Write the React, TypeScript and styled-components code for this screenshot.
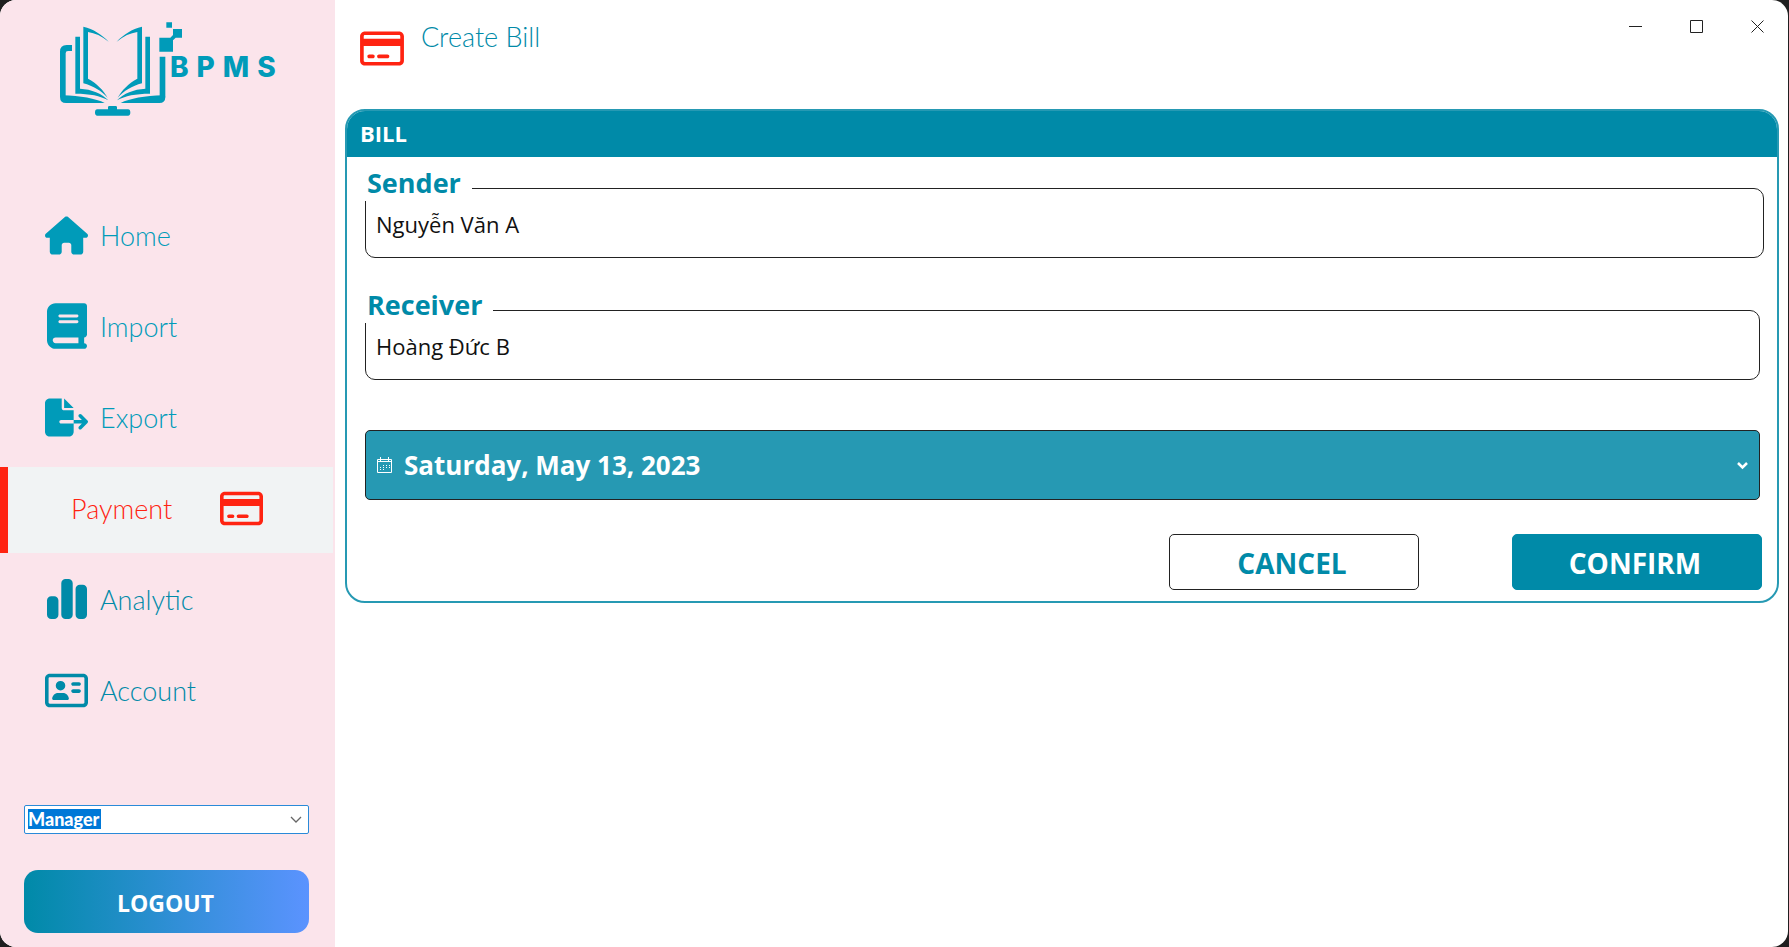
import React, { useState } from "react";
import styled, { createGlobalStyle } from "styled-components";
import {
  FaHouse,
  FaBook,
  FaFileExport,
  FaRegCreditCard,
  FaChartSimple,
  FaRegAddressCard,
} from "react-icons/fa6";

const teal = "#008aa8";
const cyan = "#009bb9";
const red = "#ff2311";
const uiFont = '"Open Sans", "Noto Sans", sans-serif';
const roundFont = 'Lato, "Noto Sans", sans-serif';

const GlobalStyle = createGlobalStyle`
  *, *::before, *::after { box-sizing: border-box; }
  body { margin: 0; background: #1f1f1f; font-family: ${uiFont}; }
  button, input, select { font-family: inherit; margin: 0; }
  button { cursor: pointer; }
`;

const AppWindow = styled.div`
  display: flex;
  min-height: 100vh;
  margin-right: 1px;
  border-radius: 16px;
  overflow: hidden;
  background: #fff;
`;

const Sidebar = styled.aside`
  display: flex;
  flex-direction: column;
  flex: 0 0 335px;
  background: #fbe4eb;
`;

const Logo = styled.div`
  display: flex;
  align-items: flex-start;
  height: 194px;
  padding: 20px 0 0 58px;
`;

const LogoMark = styled.svg`
  width: 110px;
  height: 98px;
  overflow: visible;
`;

const Wordmark = styled.span`
  margin: 33px 0 0 2px;
  font: 800 28px/28px Inter, sans-serif;
  letter-spacing: 8px;
  color: ${cyan};
`;

const Nav = styled.nav`
  display: flex;
  flex-direction: column;
  gap: 5px;
  padding-right: 2px;
`;

const NavItem = styled.a<{ $color: string; $active?: boolean }>`
  display: flex;
  align-items: center;
  height: 86px;
  gap: ${(p) => (p.$active ? 48 : 12)}px;
  padding-bottom: 2px;
  padding-left: ${(p) => (p.$active ? 63 : 37)}px;
  border-left: 8px solid ${(p) => (p.$active ? red : "transparent")};
  background: ${(p) => (p.$active ? "#f1f3f4" : "transparent")};
  color: ${(p) => p.$color};
  font: 300 27px/30px ${roundFont};
  text-decoration: none;
`;

const IconSlot = styled.span<{ $tall?: boolean }>`
  display: flex;
  justify-content: center;
  width: 43px;
  padding-bottom: 2px;

  svg {
    width: ${(p) => (p.$tall ? 40 : 43)}px;
    height: ${(p) => (p.$tall ? 46 : 39)}px;
  }
`;

const SidebarFooter = styled.div`
  display: flex;
  flex-direction: column;
  gap: 36px;
  margin-top: auto;
  padding: 0 26px 14px 24px;
`;

const RoleBox = styled.div`
  position: relative;
  display: flex;

  svg {
    position: absolute;
    top: 11px;
    right: 7px;
    pointer-events: none;
  }
`;

const RoleSelect = styled.select`
  appearance: none;
  width: 100%;
  height: 29px;
  padding: 0 24px 2px 3px;
  border: 1px solid #2a8ad8;
  border-radius: 2px;
  outline: none;
  background: linear-gradient(#0078d7, #0078d7) 3px 3px / 73px 20px no-repeat #fff;
  color: #fff;
  font: 900 18px/20px ${roundFont};
`;

const Logout = styled.button`
  height: 63px;
  padding: 2px 2px 0 0;
  border: 0;
  border-radius: 14px;
  background: linear-gradient(90deg, ${teal}, #5b93ff);
  color: #fff;
  font: 700 23px/32px ${uiFont};
`;

const Main = styled.main`
  display: flex;
  flex-direction: column;
  flex: 1;
  min-width: 0;
  padding-left: 10px;
`;

const TopBar = styled.header`
  display: flex;
  align-items: flex-start;
  height: 109px;
`;

const Title = styled.h1`
  display: flex;
  align-items: flex-start;
  gap: 17px;
  margin: 0;
  padding: 22px 0 0 15px;
  color: ${teal};
  font: 300 27px/30px ${roundFont};

  svg {
    width: 44px;
    height: 39px;
    margin-top: 7px;
    color: ${red};
  }
`;

const WindowControls = styled.div`
  display: flex;
  margin-left: auto;
`;

const WindowButton = styled.button`
  display: flex;
  align-items: center;
  justify-content: center;
  width: 61px;
  height: 53px;
  padding: 0;
  border: 0;
  background: none;
`;

const Panel = styled.section`
  margin-right: 9px;
  border: 2px solid #2699b3;
  border-radius: 20px;
  overflow: hidden;
`;

const PanelTitle = styled.h2`
  margin: -2px -2px 0;
  padding: 8px 15px;
  background: ${teal};
  color: #fff;
  font: 700 22px/32px ${uiFont};
`;

const Form = styled.form`
  display: flex;
  flex-direction: column;
  padding: 2px 13px 11px 18px;
`;

const Field = styled.div<{ $inset?: boolean }>`
  display: flex;
  flex-direction: column;
  align-items: flex-start;
  margin: 0 ${(p) => (p.$inset ? 4 : 0)}px 23px 0;
`;

const FieldLabel = styled.label`
  z-index: 1;
  height: 42px;
  margin-bottom: -13px;
  padding: 5px 11px 0 2px;
  background: #fff;
  color: ${teal};
  font: 700 27px/37px ${uiFont};
`;

const TextInput = styled.input`
  width: 100%;
  height: 70px;
  padding: 2px 10px 0;
  border: 1px solid #222;
  border-radius: 10px;
  outline: none;
  background: #fff;
  color: #111;
  font: 400 22px/32px ${uiFont};
`;

const DateButton = styled.button`
  display: flex;
  align-items: center;
  gap: 12px;
  height: 70px;
  margin: 27px 4px 34px 0;
  padding: 0 11px;
  border: 1px solid #222;
  border-radius: 5px;
  background: #2699b3;
  color: #fff;
  font: 700 26px/36px ${uiFont};

  svg:last-child {
    margin-left: auto;
  }
`;

const Actions = styled.div`
  display: flex;
  justify-content: flex-end;
  gap: 93px;
  margin-right: 2px;
`;

const ActionButton = styled.button<{ $primary?: boolean }>`
  width: 250px;
  height: 56px;
  padding: 2px 4px 0 0;
  border: 1px solid ${(p) => (p.$primary ? teal : "#222")};
  border-radius: 5px;
  background: ${(p) => (p.$primary ? teal : "#fff")};
  color: ${(p) => (p.$primary ? "#fff" : teal)};
  font: 700 28px/36px ${uiFont};
`;

/* One half of the open book: the outer cover and two pages. */
const BookHalf = () => (
  <>
    <path d="M188 286 C240 287 288 296 314 309 H198 Q180 309 180 290Z" />
    <path d="M226 110H240V266C275 268 305 280 325 301C300 287 270 281 226 281Z" />
    <path d="M250 80C280 87 305 103 326 125C305 108 285 99 264 96V236C290 250 310 270 323 293C305 273 280 258 250 250Z" />
  </>
);

const BrandMark = () => (
  <LogoMark viewBox="174 60 330 294" fill={cyan} aria-hidden="true">
    <path d="M216 135V153H204Q197 153 197 160V292H180V155Q180 135 200 135Z" />
    <BookHalf />
    <g transform="translate(676 0) scale(-1 1)">
      <BookHalf />
      <path d="M180 170H197V292H180Z" />
    </g>
    <path d="M324 322Q324 318 328 318H347Q351 318 351 322V328H384Q391 328 391 337.500Q391 347 384 347H292Q285 347 285 337.500Q285 328 292 328H324Z" />
    <path d="M478 113H511L519 105V87H546V113H527L519 121V155H478Z" />
    <path d="M499 67H516V83H499Z" />
  </LogoMark>
);

const CalendarIcon = () => (
  <svg width="15" height="16" viewBox="0 0 15 16" fill="none" stroke="#fff" aria-hidden="true">
    <path d="M.5 2.500H14.500V15.500H.5ZM.5 4.500H14.500M3.500 0V4M11.500 0V4" />
    <path d="M6 8.500H13M3 10.500H13M3 12.500H9" strokeDasharray="1 2" />
  </svg>
);

const App = () => {
  const [sender, setSender] = useState("Nguyễn Văn A");
  const [receiver, setReceiver] = useState("Hoàng Đức B");

  return (
    <>
      <GlobalStyle />
      <AppWindow>
        <Sidebar>
          <Logo>
            <BrandMark />
            <Wordmark>BPMS</Wordmark>
          </Logo>
          <Nav>
            <NavItem href="#home" $color={cyan}>
              <IconSlot><FaHouse /></IconSlot>
              Home
            </NavItem>
            <NavItem href="#import" $color={cyan}>
              <IconSlot $tall><FaBook /></IconSlot>
              Import
            </NavItem>
            <NavItem href="#export" $color={cyan}>
              <IconSlot><FaFileExport /></IconSlot>
              Export
            </NavItem>
            <NavItem href="#payment" $color={red} $active aria-current="page">
              Payment
              <IconSlot><FaRegCreditCard /></IconSlot>
            </NavItem>
            <NavItem href="#analytic" $color={teal}>
              <IconSlot $tall><FaChartSimple /></IconSlot>
              Analytic
            </NavItem>
            <NavItem href="#account" $color={teal}>
              <IconSlot><FaRegAddressCard /></IconSlot>
              Account
            </NavItem>
          </Nav>
          <SidebarFooter>
            <RoleBox>
              <RoleSelect aria-label="Role" defaultValue="Manager">
                <option>Manager</option>
              </RoleSelect>
              <svg width="12" height="8" viewBox="0 0 12 8" fill="none" stroke="#666" strokeWidth="1.300" aria-hidden="true">
                <path d="M1 1L6 6L11 1" />
              </svg>
            </RoleBox>
            <Logout type="button">LOGOUT</Logout>
          </SidebarFooter>
        </Sidebar>
        <Main>
          <TopBar>
            <Title>
              <FaRegCreditCard />
              Create Bill
            </Title>
            <WindowControls>
              <WindowButton type="button" aria-label="Minimize">
                <svg width="13" height="13" viewBox="0 0 13 13" stroke="#222">
                  <path d="M0 6.500H13" />
                </svg>
              </WindowButton>
              <WindowButton type="button" aria-label="Maximize">
                <svg width="13" height="13" viewBox="0 0 13 13" fill="none" stroke="#222">
                  <path d="M.5 .5H12.500V12.500H.5Z" />
                </svg>
              </WindowButton>
              <WindowButton type="button" aria-label="Close">
                <svg width="13" height="13" viewBox="0 0 13 13" stroke="#222">
                  <path d="M.5 .5L12.500 12.500M12.500 .5L.5 12.500" />
                </svg>
              </WindowButton>
            </WindowControls>
          </TopBar>
          <Panel>
            <PanelTitle>BILL</PanelTitle>
            <Form onSubmit={(e) => e.preventDefault()}>
              <Field>
                <FieldLabel htmlFor="sender">Sender</FieldLabel>
                <TextInput id="sender" value={sender} onChange={(e) => setSender(e.target.value)} />
              </Field>
              <Field $inset>
                <FieldLabel htmlFor="receiver">Receiver</FieldLabel>
                <TextInput id="receiver" value={receiver} onChange={(e) => setReceiver(e.target.value)} />
              </Field>
              <DateButton type="button" aria-haspopup="dialog">
                <CalendarIcon />
                Saturday, May 13, 2023
                <svg width="11" height="9" viewBox="0 0 11 9" fill="none" stroke="#fff" strokeWidth="2.500" aria-hidden="true">
                  <path d="M1 2L5.500 6.500L10 2" />
                </svg>
              </DateButton>
              <Actions>
                <ActionButton type="button">CANCEL</ActionButton>
                <ActionButton type="submit" $primary>CONFIRM</ActionButton>
              </Actions>
            </Form>
          </Panel>
        </Main>
      </AppWindow>
    </>
  );
};

export default App;
